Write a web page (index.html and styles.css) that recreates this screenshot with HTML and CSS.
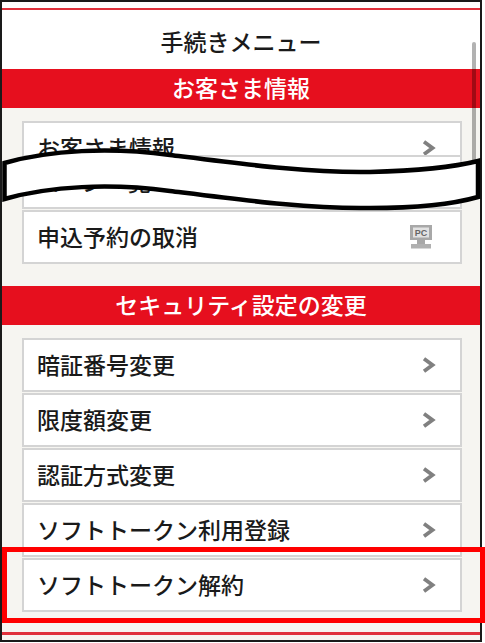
FILE: index.html
```html
<!DOCTYPE html>
<html>
<head>
    <title>手続きメニュー</title>
    <link rel="stylesheet" href="styles.css">
</head>
<body>
    <div class="screen">
        <div class="frame">
            <div class="top-line"></div>
            <h1 class="title">手続きメニュー</h1>

            <h2 class="section-title">お客さま情報</h2>
            <div class="section">
                <a class="row">
                    <span>お客さま情報</span>
                    <svg class="chevron" viewBox="0 0 14 16"><path d="M2 1.8 L10.5 8 L2 14.2"/></svg>
                </a>
                <a class="row row-cut">
                    <span>ローン一覧</span>
                    <svg class="chevron" viewBox="0 0 14 16"><path d="M2 1.8 L10.5 8 L2 14.2"/></svg>
                </a>
                <a class="row">
                    <span>申込予約の取消</span>
                    <svg class="pc-icon" viewBox="0 0 22 24">
                        <rect x="0" y="0" width="22" height="15" fill="#a8a8a8"/>
                        <rect x="3" y="2.5" width="16" height="10" fill="#e2e2e2"/>
                        <text x="11" y="11" text-anchor="middle">PC</text>
                        <rect x="7" y="15" width="8" height="4" fill="#a8a8a8"/>
                        <rect x="1" y="19" width="20" height="4.5" fill="#b0b0b0"/>
                    </svg>
                </a>
            </div>

            <h2 class="section-title">セキュリティ設定の変更</h2>
            <div class="section section-last">
                <a class="row">
                    <span>暗証番号変更</span>
                    <svg class="chevron" viewBox="0 0 14 16"><path d="M2 1.8 L10.5 8 L2 14.2"/></svg>
                </a>
                <a class="row">
                    <span>限度額変更</span>
                    <svg class="chevron" viewBox="0 0 14 16"><path d="M2 1.8 L10.5 8 L2 14.2"/></svg>
                </a>
                <a class="row">
                    <span>認証方式変更</span>
                    <svg class="chevron" viewBox="0 0 14 16"><path d="M2 1.8 L10.5 8 L2 14.2"/></svg>
                </a>
                <a class="row">
                    <span>ソフトトークン利用登録</span>
                    <svg class="chevron" viewBox="0 0 14 16"><path d="M2 1.8 L10.5 8 L2 14.2"/></svg>
                </a>
                <a class="row">
                    <span>ソフトトークン解約</span>
                    <svg class="chevron" viewBox="0 0 14 16"><path d="M2 1.8 L10.5 8 L2 14.2"/></svg>
                </a>
                <div class="bottom-line"></div>
            </div>
        </div>

        <div class="scrollbar"></div>

        <!-- torn strip laid over the page -->
        <svg class="tear" viewBox="0 0 485 643">
            <path d="M4.5 163 C50 150 110 147 170 155 C250 165 310 173 370 172 C410 171 450 168 478 161 L478 197 C450 205 410 208 370 208 C310 209 250 201 170 191 C110 183 50 186 4.5 199 Z"/>
        </svg>

        <div class="highlight"></div>
    </div>
</body>
</html>
```

FILE: styles.css
```css
body {
    margin: 0;
    font-family: "Noto Sans CJK JP", "Noto Sans", sans-serif;
    background: white;
}

.screen {
    position: relative;
    width: 485px;
    height: 643px;
    overflow: hidden;
}

.frame {
    box-sizing: border-box;
    width: 482px;
    height: 642px;
    border: 2px solid #1a1a1a;
    background: white;
    overflow: hidden;
}

.top-line {
    height: 2px;
    margin-top: 6px;
    background: #e0313c;
}

.title {
    box-sizing: border-box;
    height: 59px;
    margin: 0;
    padding-top: 2px;
    display: flex;
    justify-content: center;
    align-items: center;
    font-size: 23px;
    font-weight: 500;
    color: #1a1a1a;
}

.section-title {
    box-sizing: border-box;
    height: 39px;
    margin: 0;
    padding-bottom: 3px;
    display: flex;
    justify-content: center;
    align-items: center;
    background: #e60f1e;
    color: white;
    font-size: 23px;
    font-weight: 500;
}

.section {
    display: flex;
    flex-direction: column;
    gap: 1px;
    padding: 13px 18px 22px 20px;
    background: #f6f5f1;
}

.section-last {
    height: 400px;
}

.row {
    box-sizing: border-box;
    height: 54px;
    flex-shrink: 0;
    display: flex;
    justify-content: space-between;
    align-items: center;
    padding: 0 24px 0 13px;
    border: 2px solid #d4d4d4;
    background: white;
    font-size: 23px;
    font-weight: 500;
    color: #1a1a1a;
}

.row span {
    padding-bottom: 3px;
}

.row-cut {
    margin-top: -21px;
}

.chevron {
    width: 14px;
    height: 16px;
    fill: none;
    stroke: #808080;
    stroke-width: 3.8;
}

.pc-icon {
    width: 22px;
    height: 24px;
    margin-right: 4px;
}

.pc-icon text {
    font-family: "Liberation Sans", sans-serif;
    font-size: 9px;
    font-weight: 700;
    fill: #666;
}

.bottom-line {
    height: 3px;
    margin: 19px -18px 0 -20px;
    background: #e0313c;
}

.scrollbar {
    position: absolute;
    left: 472px;
    top: 42px;
    width: 4px;
    height: 125px;
    border-radius: 2px;
    background: rgba(0, 0, 0, 0.3);
}

.tear {
    position: absolute;
    left: 0;
    top: 0;
    width: 485px;
    height: 643px;
    fill: white;
    stroke: black;
    stroke-width: 4.5;
}

.highlight {
    position: absolute;
    left: 2px;
    top: 547px;
    box-sizing: border-box;
    width: 483px;
    height: 76px;
    border: 5px solid #ff0000;
}
```
